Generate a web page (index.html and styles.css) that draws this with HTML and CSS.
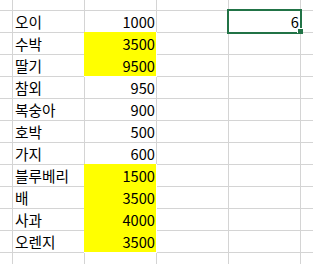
FILE: index.html
```html
<!DOCTYPE html>
<html lang="ko">
<head>
<meta charset="utf-8">
<link rel="stylesheet" href="styles.css">
</head>
<body>
<div class="sheet">
  <div class="c"></div><div class="c"></div><div class="c"></div><div class="c"></div><div class="c"></div><div class="c"></div>

  <div class="c"></div><div class="c t">오이</div><div class="c n">1000</div><div class="c"></div><div class="c n cur">6<span class="sel"></span><span class="handle"></span></div><div class="c"></div>
  <div class="c"></div><div class="c t">수박</div><div class="c n y">3500</div><div class="c"></div><div class="c"></div><div class="c"></div>
  <div class="c"></div><div class="c t">딸기</div><div class="c n y">9500</div><div class="c"></div><div class="c"></div><div class="c"></div>
  <div class="c"></div><div class="c t">참외</div><div class="c n">950</div><div class="c"></div><div class="c"></div><div class="c"></div>
  <div class="c"></div><div class="c t">복숭아</div><div class="c n">900</div><div class="c"></div><div class="c"></div><div class="c"></div>
  <div class="c"></div><div class="c t">호박</div><div class="c n">500</div><div class="c"></div><div class="c"></div><div class="c"></div>
  <div class="c"></div><div class="c t">가지</div><div class="c n">600</div><div class="c"></div><div class="c"></div><div class="c"></div>
  <div class="c"></div><div class="c t">블루베리</div><div class="c n y">1500</div><div class="c"></div><div class="c"></div><div class="c"></div>
  <div class="c"></div><div class="c t">배</div><div class="c n y">3500</div><div class="c"></div><div class="c"></div><div class="c"></div>
  <div class="c"></div><div class="c t">사과</div><div class="c n y">4000</div><div class="c"></div><div class="c"></div><div class="c"></div>
  <div class="c"></div><div class="c t">오렌지</div><div class="c n y">3500</div><div class="c"></div><div class="c"></div><div class="c"></div>

  <div class="c"></div><div class="c"></div><div class="c"></div><div class="c"></div><div class="c"></div><div class="c"></div>
</div>
</body>
</html>
```

FILE: styles.css
```css
html, body {
  margin: 0;
  padding: 0;
  background: #ffffff;
}

.sheet {
  width: 313px;
  height: 264px;
  overflow: hidden;
  display: grid;
  grid-template-columns: 12px repeat(4, 71px) 1fr;
  grid-template-rows: 10px repeat(11, 21px) 1fr;
  gap: 1px;
  background: #d4d4d4;
  font-family: "Noto Sans CJK KR", "Noto Sans", sans-serif;
  font-size: 14.67px;
  color: #000000;
}

.c {
  background: #ffffff;
  display: flex;
  align-items: flex-end;
  line-height: 20px;
  padding-top: 1px;
  box-sizing: border-box;
  white-space: nowrap;
  overflow: visible;
}

.t {
  justify-content: flex-start;
  padding-left: 2px;
}

.n {
  justify-content: flex-end;
  padding-right: 1px;
}

.y {
  background: #ffff00;
  margin: -1px -1px -1px -1px;
  padding-top: 2px;
  padding-left: 1px;
  padding-right: 1px;
  border-right: 1px solid #ffffff;
  border-bottom: 1px solid #ffffff;
}

.cur {
  position: relative;
}

.sel {
  position: absolute;
  left: -2px;
  top: -2px;
  right: -2px;
  bottom: -2px;
  border: 2px solid #217346;
}

.handle {
  position: absolute;
  left: 69px;
  top: 18px;
  width: 5px;
  height: 5px;
  background: #217346;
  box-shadow: -1px -1px 0 #ffffff;
}
```
